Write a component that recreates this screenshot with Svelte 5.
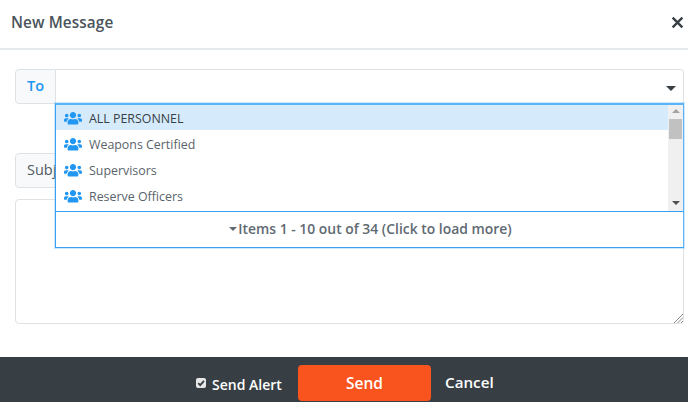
<script>
  const groups = ['ALL PERSONNEL', 'Weapons Certified', 'Supervisors', 'Reserve Officers'];
  const usersIcon = 'M96 224c35.3 0 64-28.7 64-64s-28.7-64-64-64-64 28.7-64 64 28.7 64 64 64zm448 0c35.3 0 64-28.7 64-64s-28.7-64-64-64-64 28.7-64 64 28.7 64 64 64zm32 32h-64c-17.6 0-33.5 7.1-45.1 18.6 40.3 22.1 68.9 62 75.1 109.4h66c17.7 0 32-14.3 32-32v-32c0-35.3-28.7-64-64-64zm-256 0c61.9 0 112-50.1 112-112S381.9 32 320 32 208 82.1 208 144s50.1 112 112 112zm76.8 32h-8.3c-20.8 10-43.9 16-68.5 16s-47.6-6-68.5-16h-8.3C179.6 288 128 339.6 128 403.2V432c0 26.5 21.5 48 48 48h288c26.5 0 48-21.5 48-48v-28.8c0-63.6-51.6-115.2-115.2-115.2zm-223.7-13.4C161.5 263.1 145.6 256 128 256H64c-35.3 0-64 28.7-64 64v32c0 17.7 14.3 32 32 32h65.9c6.3-47.4 34.9-87.3 75.2-109.4z';
</script>

<div class="modal">
  <header class="head">
    <h1>New Message</h1>
    <svg class="close" viewBox="0 0 12 12" width="13" height="13">
      <path d="M1.5 1.5l9 9M10.5 1.5l-9 9" stroke="#373f45" stroke-width="2.2" fill="none" />
    </svg>
  </header>

  <div class="body">
    <div class="group to-group">
      <div class="addon to">To</div>
      <div class="field">
        <span class="caret"></span>
      </div>

      <div class="dropdown">
        <div class="list">
          <div class="rows">
            {#each groups as name, i}
              <div class="row" class:selected={i === 0}>
                <svg class="users" viewBox="0 0 640 512" width="18" height="14.4">
                  <path d={usersIcon} fill="#2196f3" />
                </svg>
                <span>{name}</span>
              </div>
            {/each}
          </div>
          <div class="scrollbar">
            <span class="arrow up"></span>
            <span class="thumb"></span>
            <span class="arrow down"></span>
          </div>
        </div>
        <div class="more"><span class="more-caret"></span>Items 1 - 10 out of 34 (Click to load more)</div>
      </div>
    </div>

    <div class="group subject-group">
      <div class="addon subject">Subject</div>
      <div class="field"></div>
    </div>

    <div class="textarea">
      <svg class="grip" viewBox="0 0 10 10" width="10" height="10">
        <path d="M1 10L10 1M4.5 10L10 4.5M8 10L10 8" stroke="#8a8a8a" stroke-width="1" fill="none" />
      </svg>
    </div>
  </div>

  <footer class="foot">
    <label class="alert">
      <span class="check">
        <svg viewBox="0 0 10 10" width="10" height="10">
          <path d="M2.2 5.2l2 2 3.8-4.4" stroke="#373f45" stroke-width="1.8" fill="none" />
        </svg>
      </span>
      Send Alert
    </label>
    <button class="send">Send</button>
    <button class="cancel">Cancel</button>
  </footer>
</div>

<style>
  :global(body) {
    margin: 0;
    background: #fff;
  }

  .modal {
    width: 688px;
    height: 402px;
    display: flex;
    flex-direction: column;
    font-family: "Open Sans", "Noto Sans", sans-serif;
    color: #4f5a62;
    overflow: hidden;
  }

  .head {
    height: 48px;
    flex: none;
    border-bottom: 2px solid #e6e9ec;
    display: flex;
    align-items: center;
    justify-content: space-between;
    padding: 0 4px 0 11px;
  }

  h1 {
    margin: 0 0 4px;
    font-size: 15.3px;
    font-weight: 600;
    color: #4a545b;
    letter-spacing: 0.1px;
  }

  .close {
    margin-bottom: 4px;
  }

  .body {
    flex: 1;
    padding: 19px 4px 0 15px;
    display: flex;
    flex-direction: column;
  }

  .group {
    display: flex;
    height: 35px;
    position: relative;
  }

  .subject-group {
    margin-top: 49px;
  }

  .addon {
    box-sizing: border-box;
    flex: none;
    border: 1px solid #dfe2e5;
    border-radius: 4px 0 0 4px;
    background: #f8f9fa;
    display: flex;
    align-items: center;
    padding: 0 0 2px 11px;
    font-size: 14.5px;
    font-weight: 500;
  }

  .to {
    width: 41px;
    color: #2196f3;
    font-weight: 600;
  }

  .subject {
    width: 80px;
    color: #4f5a62;
  }

  .field {
    flex: 1;
    box-sizing: border-box;
    border: 1px solid #dfe2e5;
    border-left: 0;
    border-radius: 0 4px 4px 0;
    position: relative;
  }

  .caret {
    position: absolute;
    right: 7px;
    top: 16px;
    border: 5px solid transparent;
    border-top: 5px solid #373f45;
    border-bottom: 0;
  }

  .dropdown {
    position: absolute;
    left: 40px;
    right: 0;
    top: 34px;
    z-index: 2;
    background: #fff;
    border: 1px solid #3aa0f2;
    border-top: 2px solid #5ab4f7;
    border-right: 1px solid #5ab4f7;
    box-shadow: 0 0 0 1px rgba(90, 180, 247, 0.3);
  }

  .list {
    display: flex;
    height: 106px;
    border-bottom: 1px solid #3aa0f2;
  }

  .rows {
    flex: 1;
    overflow: hidden;
  }

  .row {
    height: 26px;
    box-sizing: border-box;
    display: flex;
    align-items: center;
    gap: 7px;
    padding-left: 8px;
    font-size: 12.4px;
    color: #59636b;
  }

  .row.selected {
    height: 25px;
    padding-top: 1px;
    margin-bottom: 1px;
    background: #d5ebfc;
    color: #373f45;
  }

  .users {
    flex: none;
  }

  .scrollbar {
    width: 15px;
    flex: none;
    background: #f0f0f0;
    display: flex;
    flex-direction: column;
    align-items: center;
    position: relative;
  }

  .arrow {
    position: absolute;
    border: 4px solid transparent;
  }

  .arrow.up {
    top: 4px;
    border-top: 0;
    border-bottom: 4px solid #a3a3a3;
  }

  .arrow.down {
    bottom: 6px;
    border-bottom: 0;
    border-top: 4px solid #505050;
  }

  .thumb {
    width: 13px;
    height: 20px;
    margin-top: 14px;
    background: #c1c1c1;
  }

  .more {
    height: 35px;
    display: flex;
    align-items: center;
    justify-content: center;
    padding: 0 0 2px 2px;
    box-sizing: border-box;
    font-size: 13.9px;
    font-weight: 600;
    color: #5f6a72;
  }

  .more-caret {
    border: 4px solid transparent;
    border-top: 4px solid #5f6a72;
    border-bottom: 0;
    margin-right: 1px;
  }

  .textarea {
    margin-top: 11px;
    height: 125px;
    box-sizing: border-box;
    border: 1px solid #dfe2e5;
    border-radius: 4px;
    position: relative;
  }

  .grip {
    position: absolute;
    right: 0;
    bottom: 0;
  }

  .foot {
    height: 45px;
    flex: none;
    box-sizing: border-box;
    padding-top: 8px;
    background: #373f45;
    display: flex;
    align-items: flex-start;
    color: #fff;
    font-weight: 600;
    font-size: 14px;
  }

  .alert {
    margin: 10px 0 0 196px;
    display: flex;
    align-items: center;
    gap: 6px;
    width: 102px;
    box-sizing: border-box;
  }

  .check {
    width: 10px;
    height: 10px;
    border-radius: 2px;
    background: #e8e8e8;
    margin-top: -3px;
    display: block;
  }

  .check svg {
    display: block;
  }

  button {
    font: inherit;
    border: 0;
    color: #fff;
    padding: 0;
    background: none;
  }

  .send {
    width: 133px;
    height: 36px;
    background: #f9531e;
    border-radius: 4px;
    font-size: 15.5px;
  }

  .cancel {
    margin: 7px 0 0 14px;
    font-size: 15.2px;
  }
</style>
